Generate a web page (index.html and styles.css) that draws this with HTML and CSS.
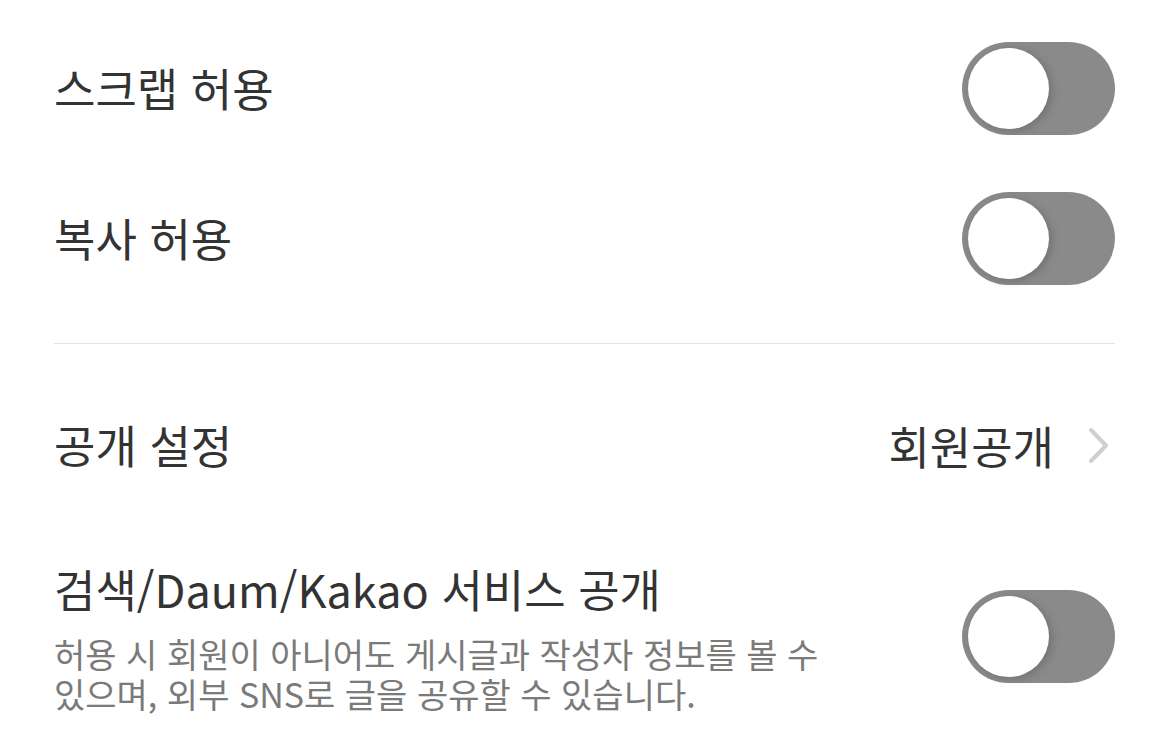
FILE: index.html
```html
<!DOCTYPE html>
<html lang="ko">
  <head>
    <meta charset="UTF-8" />
    <meta name="viewport" content="width=device-width, initial-scale=1.0" />
    <title>글 설정</title>
    <link rel="stylesheet" href="styles.css">
  </head>
  <body>
    <div class="settings">
      <!-- 허용 옵션 -->
      <div class="row">
        <span class="label">스크랩 허용</span>
        <span class="switch"><span class="knob"></span></span>
      </div>
      <div class="row">
        <span class="label">복사 허용</span>
        <span class="switch"><span class="knob"></span></span>
      </div>

      <div class="divider"></div>

      <!-- 공개 설정 -->
      <div class="row row-link">
        <span class="label">공개 설정</span>
        <span class="value">
          회원공개
          <svg class="chevron" width="22" height="37" viewBox="0 0 22 37">
            <path d="M3 3 L18 18.5 L3 34" fill="none" stroke="#cfcfcf" stroke-width="4" stroke-linecap="round" stroke-linejoin="round" />
          </svg>
        </span>
      </div>

      <div class="row row-desc">
        <div class="text">
          <div class="label">검색/Daum/Kakao 서비스 공개</div>
          <p class="desc">
            허용 시 회원이 아니어도 게시글과 작성자 정보를 볼 수<br />
            있으며, 외부 SNS로 글을 공유할 수 있습니다.
          </p>
        </div>
        <span class="switch"><span class="knob"></span></span>
      </div>
    </div>
  </body>
</html>
```

FILE: styles.css
```css
body {
  margin: 0;
  background: #fff;
  font-family: "Noto Sans CJK KR", "Noto Sans", sans-serif;
  color: #333;
}

.settings {
  padding: 13px 55px 0 54px;
}

.row {
  display: flex;
  justify-content: space-between;
  align-items: center;
  height: 150px;
}

.label {
  display: block;
  font-size: 45px;
  line-height: 60px;
}

.divider {
  border-top: 1px solid #e3e3e3;
  margin-top: 30px;
}

.row-link {
  height: 140px;
  margin-top: 31px;
}

.value {
  display: flex;
  align-items: center;
  font-size: 45px;
  gap: 34px;
}

.chevron {
  margin-right: 5px;
}

.row-desc {
  height: auto;
  padding-top: 44px;
}

.desc {
  margin: 15px 0 0;
  font-size: 34px;
  line-height: 40px;
  color: #7a7a7a;
}

/* 스위치 (꺼짐 상태) */
.switch {
  position: relative;
  flex: none;
  width: 153px;
  height: 93px;
  border-radius: 47px;
  background: #8a8a8a;
}

.knob {
  position: absolute;
  left: 6px;
  top: 6px;
  width: 81px;
  height: 81px;
  border-radius: 50%;
  background: #fff;
  box-shadow: 3px 2px 8px rgba(0, 0, 0, 0.18);
}
```
